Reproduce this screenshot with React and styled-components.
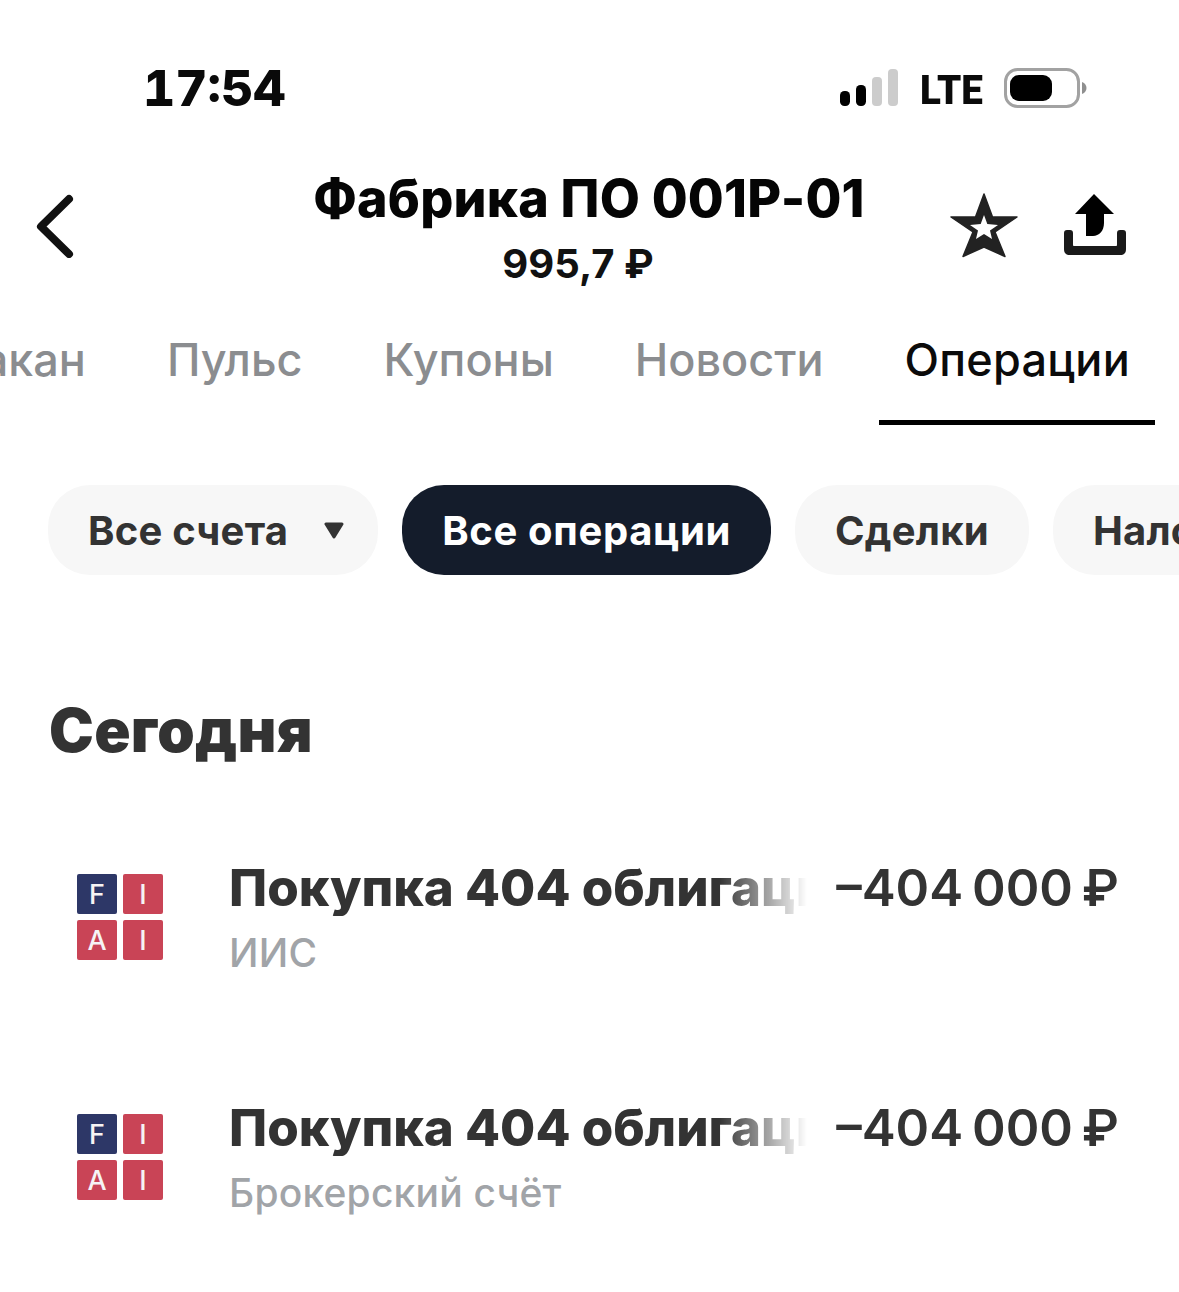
import React from "react";
import styled, { createGlobalStyle } from "styled-components";

const Global = createGlobalStyle`
  html, body { margin: 0; padding: 0; background: #fff; }
  body { font-family: Inter, "Liberation Sans", sans-serif; -webkit-font-smoothing: antialiased; }
`;
const Page = styled.div`
  width: 1179px; height: 1292px; overflow: hidden; background: #fff; display: flex; flex-direction: column;
`;
const StatusBar = styled.div`
  height: 58px; margin-top: 59px; padding: 0 91px 0 143px; display: flex; align-items: center; justify-content: space-between;
`;
const Time = styled.div`
  font-size: 50px; font-weight: 800; color: #0a0a0a; line-height: 58px; font-feature-settings: "tnum", "case";
`;
const StatusRight = styled.div`
  display: flex; align-items: center; gap: 22px;
`;
const Lte = styled.span`
  font-family: "Roboto", sans-serif; font-size: 41px; font-weight: 900; color: #0a0a0a; line-height: 40px; margin-top: 4px;
  transform: scaleX(.94); transform-origin: left; width: 62px;
`;
const Header = styled.div`
  margin-top: 50px; height: 120px; padding-left: 36px; display: flex; align-items: flex-start;
`;
const Back = styled.div`
  width: 38px; margin-top: 27px; display: flex;
`;
const TitleBlock = styled.div`
  width: 720px; margin-left: 156px; display: flex; flex-direction: column; align-items: center;
`;
const Title = styled.div`
  margin-top: 1px; margin-right: 2px; font-size: 52px; font-weight: 800; color: #050505; line-height: 62px; white-space: nowrap; letter-spacing: 0.2px;
`;
const Price = styled.div`
  margin-top: 11px; margin-right: 24px; font-size: 40px; font-weight: 700; color: #111; line-height: 46px; white-space: nowrap;
`;
const Actions = styled.div`
  margin-top: 25px; display: flex; gap: 45px; align-items: center;
`;
const Tabs = styled.div`
  margin-top: 38px; height: 100px; padding-right: 24px; display: flex; justify-content: flex-end; gap: 30px; overflow: hidden;
`;
const Tab = styled.div`
  flex: none; padding: 0 25px 0 26px; box-sizing: border-box; height: 100px; line-height: 70px; font-size: 45px; font-weight: 500; white-space: nowrap;
  letter-spacing: ${p => (p.$active ? "0.25px" : "0")};
  color: ${p => (p.$active ? "#0b0b0b" : "#8b8d90")};
  border-bottom: 5px solid ${p => (p.$active ? "#000" : "transparent")};
`;
const Chips = styled.div`
  margin-top: 60px; padding-left: 48px; display: flex; gap: 24px; overflow: hidden;
`;
const Chip = styled.div`
  flex: none; height: 90px; border-radius: 42px; padding: 0 40px; box-sizing: border-box; display: flex; align-items: center; gap: 36px;
  font-size: 40px; font-weight: 700; white-space: nowrap;
  letter-spacing: ${p => (p.$active ? "0.65px" : "0.22px")};
  background: ${p => (p.$active ? "#141c2b" : "#f7f7f7")};
  color: ${p => (p.$active ? "#fff" : "#333")};
  svg { margin-right: -6px; }
`;
const Heading = styled.h2`
  margin: 118px 0 0 49px; font-size: 60px; font-weight: 900; color: #333; line-height: 74px; letter-spacing: 0.3px;
`;
const Rows = styled.div`
  margin-top: 107px; display: flex; flex-direction: column; gap: 154px;
`;
const Row = styled.div`
  display: flex; height: 86px; padding: 0 60px 0 77px;
`;
const Logo = styled.div`
  flex: none; width: 86px; height: 86px; display: grid; grid-template-columns: 40px 40px; grid-template-rows: 40px 40px; gap: 6px;
`;
const Cell = styled.div`
  display: flex; align-items: center; justify-content: center; border-radius: 2px;
  background: ${p => (p.$blue ? "#2d3767" : "#c94456")}; color: #f6f3f4;
  font-size: 27px; font-weight: 500; line-height: 1;
`;
const Body = styled.div`
  margin-left: 66px; margin-top: -14px; flex: 1; min-width: 0; display: flex; flex-direction: column;
`;
const TopLine = styled.div`
  display: flex; justify-content: space-between; height: 56px;
`;
const OpTitle = styled.div`
  width: 580px; overflow: hidden; white-space: nowrap; font-size: 51px; font-weight: 800; color: #333; line-height: 56px;
  -webkit-mask-image: linear-gradient(to right, #000 490px, transparent 578px);
  mask-image: linear-gradient(to right, #000 490px, transparent 578px);
`;
const Amount = styled.div`
  font-size: 51px; font-weight: 600; color: #333; line-height: 56px; white-space: nowrap; word-spacing: -4px;
`;
const Sub = styled.div`
  margin-top: 14px; font-size: 39px; font-weight: 500; color: #a1a4a8; line-height: 46px; letter-spacing: 0.2px;
`;

const Signal = () => (
  <svg width="58" height="38" viewBox="0 0 58 38">
    <rect x="0" y="22" width="10" height="15" rx="4.5" fill="#000" />
    <rect x="16" y="16" width="10" height="21" rx="4.5" fill="#000" />
    <rect x="32" y="8" width="10" height="29" rx="4" fill="#ccc" />
    <rect x="48" y="0" width="10" height="37" rx="4" fill="#ccc" />
  </svg>
);
const Battery = () => (
  <svg width="84" height="40" viewBox="0 0 84 40">
    <rect x="1.5" y="1.5" width="73" height="37" rx="12" fill="#fff" stroke="#a2a2a2" strokeWidth="3" />
    <rect x="6" y="7" width="42" height="26" rx="9" fill="#000" />
    <path d="M78 14 C81 15 82.5 17.5 82.5 20 C82.5 22.5 81 25 78 26 Z" fill="#8f8f8f" />
  </svg>
);
const Chevron = () => (
  <svg width="38" height="64" viewBox="0 0 38 64">
    <path d="M33 5 L5 32.5 L33 60" fill="none" stroke="#111" strokeWidth="8" strokeLinecap="round" strokeLinejoin="round" />
  </svg>
);
const Star = () => (
  <svg width="68" height="66" viewBox="0 0 68 66">
    <path fill="#222" stroke="#222" strokeWidth="1.5" strokeLinejoin="round"
      d="M34 2 L42.5 25 L67 25 L45 40 L55 64.5 L34 55 L13 64.5 L23 40 L1 25 L25.5 25 Z" />
    <path fill="#fff" d="M34 23 L37.3 32 L48 33 L40 38.5 L42 47 L34 42 L26 47 L28 38.5 L20 33 L30.7 32 Z" />
  </svg>
);
const Share = () => (
  <svg width="64" height="64" viewBox="0 0 64 64">
    <path fill="#000" d="M31 1 L51 21 L41 21 L41 30 C41 38 36 43 30 43 L23 43 L23 21 L12 21 Z" />
    <path fill="#1a1a1a" d="M1 40 C1 38 2 37 4 37 L7 37 C9 37 10 38 10 40 L10 51 C10 53 10 53 12 53 L52 53 C54 53 54 53 54 51 L54 40 C54 38 55 37 57 37 L60 37 C62 37 63 38 63 40 L63 56 C63 60 61 62 57 62 L7 62 C3 62 1 60 1 56 Z" />
  </svg>
);
const Caret = () => (
  <svg width="20" height="17" viewBox="0 0 20 17">
    <path d="M2 2 L18 2 L10 15 Z" fill="#333" stroke="#333" strokeWidth="3" strokeLinejoin="round" />
  </svg>
);
const FiaiLogo = () => (
  <Logo>
    <Cell $blue>F</Cell>
    <Cell>I</Cell>
    <Cell>A</Cell>
    <Cell>I</Cell>
  </Logo>
);
const Operation = ({ sub }) => (
  <Row>
    <FiaiLogo />
    <Body>
      <TopLine>
        <OpTitle>Покупка 404 облигаций</OpTitle>
        <Amount>–404 000 ₽</Amount>
      </TopLine>
      <Sub>{sub}</Sub>
    </Body>
  </Row>
);

export default function App() {
  return (
    <Page>
      <Global />
      <StatusBar>
        <Time>17:54</Time>
        <StatusRight>
          <Signal />
          <Lte>LTE</Lte>
          <Battery />
        </StatusRight>
      </StatusBar>
      <Header>
        <Back><Chevron /></Back>
        <TitleBlock>
          <Title>Фабрика ПО 001Р-01</Title>
          <Price>995,7 ₽</Price>
        </TitleBlock>
        <Actions>
          <Star />
          <Share />
        </Actions>
      </Header>
      <Tabs>
        <Tab>Стакан</Tab>
        <Tab>Пульс</Tab>
        <Tab>Купоны</Tab>
        <Tab>Новости</Tab>
        <Tab $active>Операции</Tab>
      </Tabs>
      <Chips>
        <Chip>Все счета <Caret /></Chip>
        <Chip $active>Все операции</Chip>
        <Chip>Сделки</Chip>
        <Chip>Налоги</Chip>
      </Chips>
      <Heading>Сегодня</Heading>
      <Rows>
        <Operation sub="ИИС" />
        <Operation sub="Брокерский счёт" />
      </Rows>
    </Page>
  );
}
